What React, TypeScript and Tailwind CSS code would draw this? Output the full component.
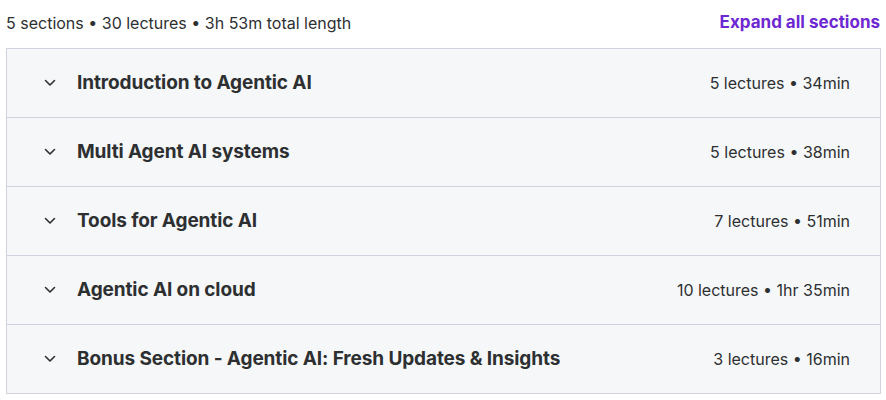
const sections = [
  { title: "Introduction to Agentic AI", meta: "5 lectures • 34min" },
  { title: "Multi Agent AI systems", meta: "5 lectures • 38min" },
  { title: "Tools for Agentic AI", meta: "7 lectures • 51min" },
  { title: "Agentic AI on cloud", meta: "10 lectures • 1hr 35min" },
  { title: "Bonus Section - Agentic AI: Fresh Updates & Insights", meta: "3 lectures • 16min" },
];

function Chevron() {
  return (
    <svg width="12" height="8" viewBox="0 0 12 8" fill="none" className="text-[#2d2f31]">
      <path d="M1.5 1.5L6 6L10.5 1.5" stroke="currentColor" strokeWidth="1.6" strokeLinecap="round" strokeLinejoin="round" />
    </svg>
  );
}

export default function App() {
  return (
    <div className="w-[886px] h-[400px] bg-white font-['Inter',sans-serif] text-[#2d2f31]">
      <div className="flex items-center justify-between pl-[6px] pr-[6px] pt-[11px] h-[48px] pb-[14px]">
        <p className="text-[16px]">5 sections • 30 lectures • 3h 53m total length</p>
        <button className="text-[17px] font-bold text-[#6d28d2]">Expand all sections</button>
      </div>
      <div className="mx-[6px] w-[875px] border border-[#d1d2e0] bg-[#f6f7f9]">
        {sections.map((s, i) => (
          <div
            key={s.title}
            className={`flex items-center pl-[37px] pr-[30px] ${i < sections.length - 1 ? "h-[69px] border-b border-[#d1d2e0]" : "h-[68px]"}`}
          >
            <Chevron />
            <p className="ml-[21px] flex-1 text-[19px] font-bold tracking-[-0.1px]">{s.title}</p>
            <span className="text-[16px]">{s.meta}</span>
          </div>
        ))}
      </div>
    </div>
  );
}
